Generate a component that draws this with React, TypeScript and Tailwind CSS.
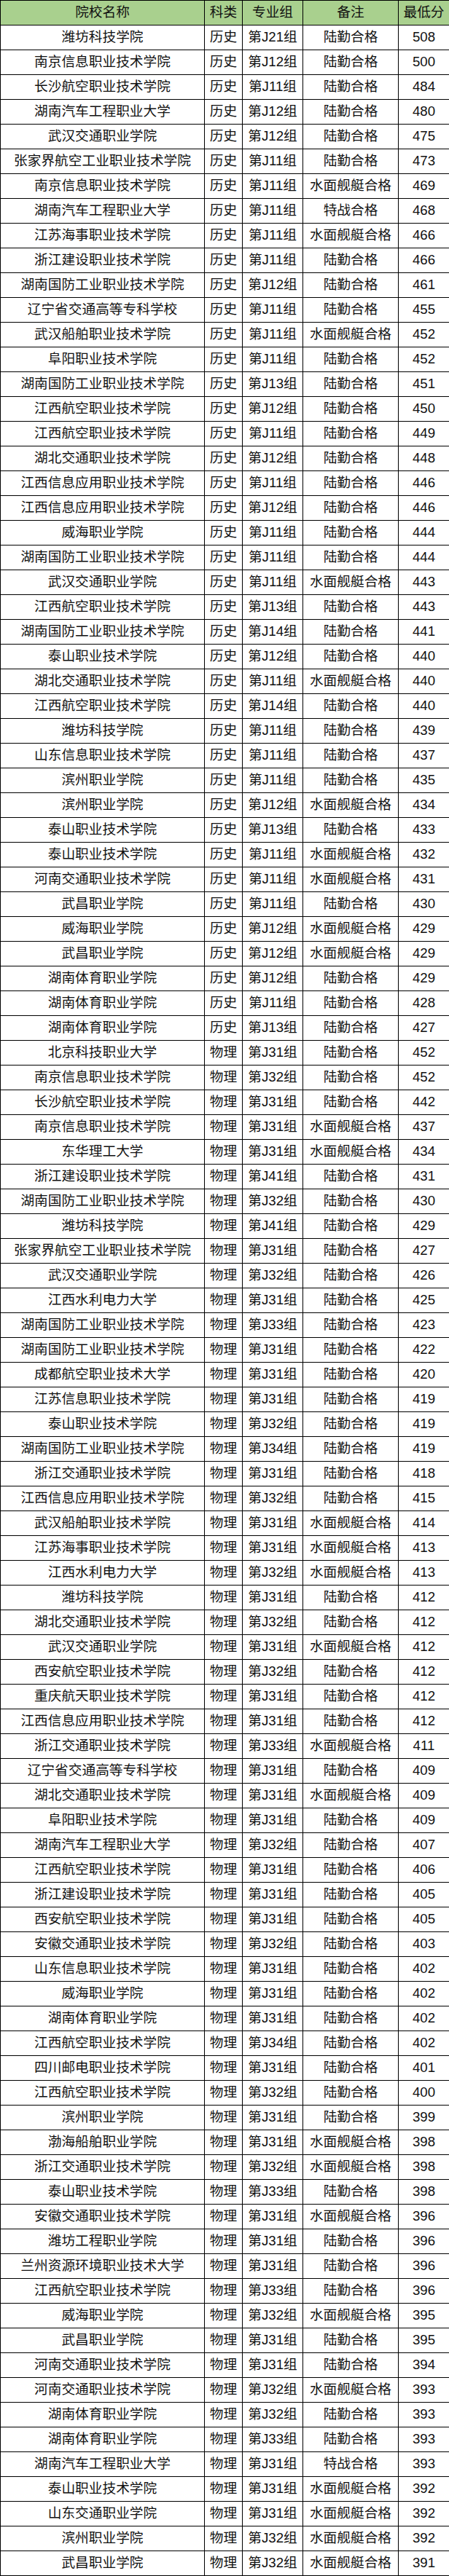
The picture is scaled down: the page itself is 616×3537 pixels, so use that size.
const rows: [string, string, string, string, number][] = [
  ["潍坊科技学院", "历史", "第J21组", "陆勤合格", 508],
  ["南京信息职业技术学院", "历史", "第J12组", "陆勤合格", 500],
  ["长沙航空职业技术学院", "历史", "第J11组", "陆勤合格", 484],
  ["湖南汽车工程职业大学", "历史", "第J12组", "陆勤合格", 480],
  ["武汉交通职业学院", "历史", "第J12组", "陆勤合格", 475],
  ["张家界航空工业职业技术学院", "历史", "第J11组", "陆勤合格", 473],
  ["南京信息职业技术学院", "历史", "第J11组", "水面舰艇合格", 469],
  ["湖南汽车工程职业大学", "历史", "第J11组", "特战合格", 468],
  ["江苏海事职业技术学院", "历史", "第J11组", "水面舰艇合格", 466],
  ["浙江建设职业技术学院", "历史", "第J11组", "陆勤合格", 466],
  ["湖南国防工业职业技术学院", "历史", "第J12组", "陆勤合格", 461],
  ["辽宁省交通高等专科学校", "历史", "第J11组", "陆勤合格", 455],
  ["武汉船舶职业技术学院", "历史", "第J11组", "水面舰艇合格", 452],
  ["阜阳职业技术学院", "历史", "第J11组", "陆勤合格", 452],
  ["湖南国防工业职业技术学院", "历史", "第J13组", "陆勤合格", 451],
  ["江西航空职业技术学院", "历史", "第J12组", "陆勤合格", 450],
  ["江西航空职业技术学院", "历史", "第J11组", "陆勤合格", 449],
  ["湖北交通职业技术学院", "历史", "第J12组", "陆勤合格", 448],
  ["江西信息应用职业技术学院", "历史", "第J11组", "陆勤合格", 446],
  ["江西信息应用职业技术学院", "历史", "第J12组", "陆勤合格", 446],
  ["威海职业学院", "历史", "第J11组", "陆勤合格", 444],
  ["湖南国防工业职业技术学院", "历史", "第J11组", "陆勤合格", 444],
  ["武汉交通职业学院", "历史", "第J11组", "水面舰艇合格", 443],
  ["江西航空职业技术学院", "历史", "第J13组", "陆勤合格", 443],
  ["湖南国防工业职业技术学院", "历史", "第J14组", "陆勤合格", 441],
  ["泰山职业技术学院", "历史", "第J12组", "陆勤合格", 440],
  ["湖北交通职业技术学院", "历史", "第J11组", "水面舰艇合格", 440],
  ["江西航空职业技术学院", "历史", "第J14组", "陆勤合格", 440],
  ["潍坊科技学院", "历史", "第J11组", "陆勤合格", 439],
  ["山东信息职业技术学院", "历史", "第J11组", "陆勤合格", 437],
  ["滨州职业学院", "历史", "第J11组", "陆勤合格", 435],
  ["滨州职业学院", "历史", "第J12组", "水面舰艇合格", 434],
  ["泰山职业技术学院", "历史", "第J13组", "陆勤合格", 433],
  ["泰山职业技术学院", "历史", "第J11组", "水面舰艇合格", 432],
  ["河南交通职业技术学院", "历史", "第J11组", "水面舰艇合格", 431],
  ["武昌职业学院", "历史", "第J11组", "陆勤合格", 430],
  ["威海职业学院", "历史", "第J12组", "水面舰艇合格", 429],
  ["武昌职业学院", "历史", "第J12组", "水面舰艇合格", 429],
  ["湖南体育职业学院", "历史", "第J12组", "陆勤合格", 429],
  ["湖南体育职业学院", "历史", "第J11组", "陆勤合格", 428],
  ["湖南体育职业学院", "历史", "第J13组", "陆勤合格", 427],
  ["北京科技职业大学", "物理", "第J31组", "陆勤合格", 452],
  ["南京信息职业技术学院", "物理", "第J32组", "陆勤合格", 452],
  ["长沙航空职业技术学院", "物理", "第J31组", "陆勤合格", 442],
  ["南京信息职业技术学院", "物理", "第J31组", "水面舰艇合格", 437],
  ["东华理工大学", "物理", "第J31组", "水面舰艇合格", 434],
  ["浙江建设职业技术学院", "物理", "第J41组", "陆勤合格", 431],
  ["湖南国防工业职业技术学院", "物理", "第J32组", "陆勤合格", 430],
  ["潍坊科技学院", "物理", "第J41组", "陆勤合格", 429],
  ["张家界航空工业职业技术学院", "物理", "第J31组", "陆勤合格", 427],
  ["武汉交通职业学院", "物理", "第J32组", "陆勤合格", 426],
  ["江西水利电力大学", "物理", "第J31组", "陆勤合格", 425],
  ["湖南国防工业职业技术学院", "物理", "第J33组", "陆勤合格", 423],
  ["湖南国防工业职业技术学院", "物理", "第J31组", "陆勤合格", 422],
  ["成都航空职业技术大学", "物理", "第J31组", "陆勤合格", 420],
  ["江苏信息职业技术学院", "物理", "第J31组", "陆勤合格", 419],
  ["泰山职业技术学院", "物理", "第J32组", "陆勤合格", 419],
  ["湖南国防工业职业技术学院", "物理", "第J34组", "陆勤合格", 419],
  ["浙江交通职业技术学院", "物理", "第J31组", "陆勤合格", 418],
  ["江西信息应用职业技术学院", "物理", "第J32组", "陆勤合格", 415],
  ["武汉船舶职业技术学院", "物理", "第J31组", "水面舰艇合格", 414],
  ["江苏海事职业技术学院", "物理", "第J31组", "水面舰艇合格", 413],
  ["江西水利电力大学", "物理", "第J32组", "水面舰艇合格", 413],
  ["潍坊科技学院", "物理", "第J31组", "陆勤合格", 412],
  ["湖北交通职业技术学院", "物理", "第J32组", "陆勤合格", 412],
  ["武汉交通职业学院", "物理", "第J31组", "水面舰艇合格", 412],
  ["西安航空职业技术学院", "物理", "第J32组", "陆勤合格", 412],
  ["重庆航天职业技术学院", "物理", "第J31组", "陆勤合格", 412],
  ["江西信息应用职业技术学院", "物理", "第J31组", "陆勤合格", 412],
  ["浙江交通职业技术学院", "物理", "第J33组", "水面舰艇合格", 411],
  ["辽宁省交通高等专科学校", "物理", "第J31组", "陆勤合格", 409],
  ["湖北交通职业技术学院", "物理", "第J31组", "水面舰艇合格", 409],
  ["阜阳职业技术学院", "物理", "第J31组", "陆勤合格", 409],
  ["湖南汽车工程职业大学", "物理", "第J32组", "陆勤合格", 407],
  ["江西航空职业技术学院", "物理", "第J31组", "陆勤合格", 406],
  ["浙江建设职业技术学院", "物理", "第J31组", "陆勤合格", 405],
  ["西安航空职业技术学院", "物理", "第J31组", "陆勤合格", 405],
  ["安徽交通职业技术学院", "物理", "第J32组", "陆勤合格", 403],
  ["山东信息职业技术学院", "物理", "第J31组", "陆勤合格", 402],
  ["威海职业学院", "物理", "第J31组", "陆勤合格", 402],
  ["湖南体育职业学院", "物理", "第J31组", "陆勤合格", 402],
  ["江西航空职业技术学院", "物理", "第J34组", "陆勤合格", 402],
  ["四川邮电职业技术学院", "物理", "第J31组", "陆勤合格", 401],
  ["江西航空职业技术学院", "物理", "第J32组", "陆勤合格", 400],
  ["滨州职业学院", "物理", "第J31组", "陆勤合格", 399],
  ["渤海船舶职业学院", "物理", "第J31组", "水面舰艇合格", 398],
  ["浙江交通职业技术学院", "物理", "第J32组", "水面舰艇合格", 398],
  ["泰山职业技术学院", "物理", "第J33组", "陆勤合格", 398],
  ["安徽交通职业技术学院", "物理", "第J31组", "水面舰艇合格", 396],
  ["潍坊工程职业学院", "物理", "第J31组", "陆勤合格", 396],
  ["兰州资源环境职业技术大学", "物理", "第J31组", "陆勤合格", 396],
  ["江西航空职业技术学院", "物理", "第J33组", "陆勤合格", 396],
  ["威海职业学院", "物理", "第J32组", "水面舰艇合格", 395],
  ["武昌职业学院", "物理", "第J31组", "陆勤合格", 395],
  ["河南交通职业技术学院", "物理", "第J31组", "陆勤合格", 394],
  ["河南交通职业技术学院", "物理", "第J32组", "水面舰艇合格", 393],
  ["湖南体育职业学院", "物理", "第J32组", "陆勤合格", 393],
  ["湖南体育职业学院", "物理", "第J33组", "陆勤合格", 393],
  ["湖南汽车工程职业大学", "物理", "第J31组", "特战合格", 393],
  ["泰山职业技术学院", "物理", "第J31组", "水面舰艇合格", 392],
  ["山东交通职业学院", "物理", "第J31组", "水面舰艇合格", 392],
  ["滨州职业学院", "物理", "第J32组", "水面舰艇合格", 392],
  ["武昌职业学院", "物理", "第J32组", "水面舰艇合格", 391],
];

const headers = ["院校名称", "科类", "专业组", "备注", "最低分"];

const cell = "border border-black p-0 text-center whitespace-nowrap overflow-hidden";

export default function App() {
  return (
    <div className="w-[616px] bg-white">
      <table className="w-[616px] table-fixed border-collapse text-[18.7px] leading-none text-[#111] font-['Liberation_Sans','Noto_Sans_CJK_SC',sans-serif]">
        <colgroup>
          <col className="w-[280px]" />
          <col className="w-[52px]" />
          <col className="w-[83px]" />
          <col className="w-[131px]" />
          <col className="w-[70px]" />
        </colgroup>
        <thead>
          <tr className="h-[34px] bg-[#a9d08e]">
            {headers.map((h) => (
              <th key={h} className={`${cell} font-normal`}>
                {h}
              </th>
            ))}
          </tr>
        </thead>
        <tbody>
          {rows.map((r, i) => (
            <tr key={i} className="h-[34px]">
              <td className={cell}>{r[0]}</td>
              <td className={cell}>{r[1]}</td>
              <td className={cell}>{r[2]}</td>
              <td className={cell}>{r[3]}</td>
              <td className={cell}>{r[4]}</td>
            </tr>
          ))}
        </tbody>
      </table>
    </div>
  );
}
